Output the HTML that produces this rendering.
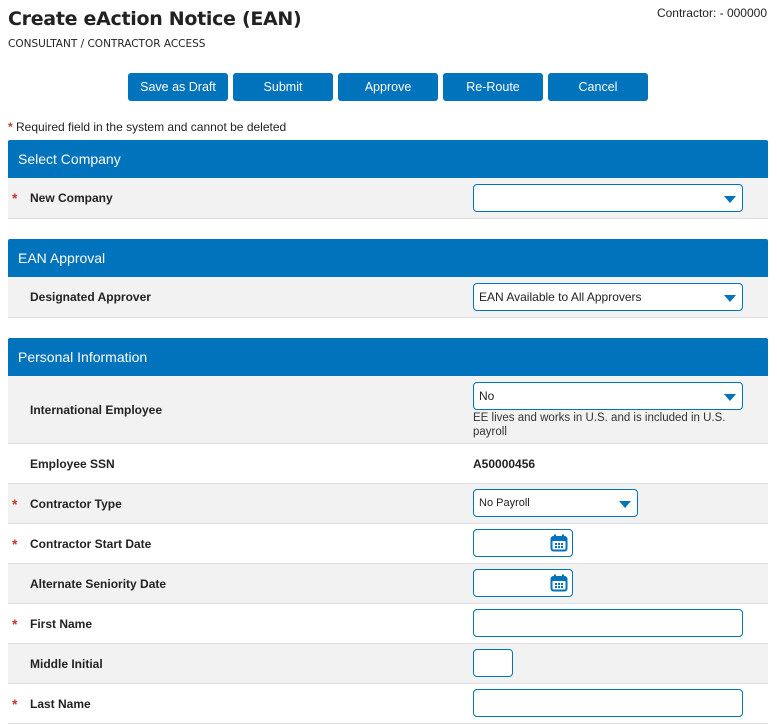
<!DOCTYPE html>
<html><head><style>
body{margin:0;width:777px;height:721px;overflow:hidden;background:#fff;font-family:"Liberation Sans",sans-serif;color:#222;position:relative}
.a{position:absolute}
h1{position:absolute;left:8px;top:8px;margin:0;font-size:19px;font-weight:bold;color:#222;font-family:"DejaVu Sans",sans-serif;letter-spacing:-0.3px}
.btn{position:absolute;top:73px;width:100px;height:28px;background:#0073bd;color:#fff;border-radius:3px;font-size:12.5px;text-align:center;line-height:28px}
.hd{position:absolute;left:8px;width:760px;height:38px;background:#0073bd;color:#fff;font-size:14px;line-height:38px;text-indent:10px;border-radius:2px 2px 0 0}
.row{position:absolute;left:8px;width:760px;border-bottom:1px solid #ddd;box-sizing:border-box}
.g{background:#f2f2f2}
.lb{position:absolute;left:22px;font-size:12px;font-weight:bold}
.st{position:absolute;left:4px;color:#c0392b;font-size:14px;font-weight:bold}
.in{position:absolute;left:465px;height:28px;border:1px solid #0073bd;border-radius:4px;background:#fff;box-sizing:border-box;font-size:12px;line-height:26px;padding-left:5px}
.tri{position:absolute;right:6px;top:11px;width:0;height:0;border-left:6px solid transparent;border-right:6px solid transparent;border-top:7px solid #0073bd}
.cal{position:absolute;right:4px;top:4px}
</style></head><body>
<h1>Create eAction Notice (EAN)</h1>
<div class="a" style="left:8px;top:38px;font-size:11.5px;font-family:'DejaVu Sans',sans-serif;font-size:10.5px">CONSULTANT / CONTRACTOR ACCESS</div>
<div class="a" style="right:10px;top:6px;font-size:12px">Contractor: - 000000</div>
<div class="btn" style="left:128px">Save as Draft</div>
<div class="btn" style="left:233px">Submit</div>
<div class="btn" style="left:338px">Approve</div>
<div class="btn" style="left:443px">Re-Route</div>
<div class="btn" style="left:548px">Cancel</div>
<div class="a" style="left:8px;top:120px;font-size:12px"><span style="color:#c0392b;font-weight:bold">*</span> Required field in the system and cannot be deleted</div>

<div class="hd" style="top:140px">Select Company</div>
<div class="row g" style="top:178px;height:41px"><span class="st" style="top:12px">*</span><span class="lb" style="top:13px">New Company</span><div class="in" style="top:6px;width:270px"><div class="tri"></div></div></div>

<div class="hd" style="top:239px">EAN Approval</div>
<div class="row g" style="top:277px;height:41px"><span class="lb" style="top:13px">Designated Approver</span><div class="in" style="top:6px;width:270px">EAN Available to All Approvers<div class="tri"></div></div></div>

<div class="hd" style="top:338px">Personal Information</div>
<div class="row g" style="top:376px;height:68px"><span class="lb" style="top:27px">International Employee</span><div class="in" style="top:6px;width:270px">No<div class="tri"></div></div><div class="a" style="left:465px;top:35px;font-size:11.5px;line-height:14px;color:#333">EE lives and works in U.S. and is included in U.S.<br>payroll</div></div>
<div class="row" style="top:444px;height:40px"><span class="lb" style="top:13px">Employee SSN</span><span class="a" style="left:465px;top:13px;font-size:12px;font-weight:bold">A50000456</span></div>
<div class="row g" style="top:484px;height:40px"><span class="st" style="top:12px">*</span><span class="lb" style="top:13px">Contractor Type</span><div class="in" style="top:5px;width:165px;font-size:11px">No Payroll<div class="tri"></div></div></div>
<div class="row" style="top:524px;height:40px"><span class="st" style="top:12px">*</span><span class="lb" style="top:13px">Contractor Start Date</span><div class="in" style="top:5px;width:100px"><svg class="cal" width="18" height="18" viewBox="0 0 18 18"><rect x="1.5" y="3" width="15" height="13.5" rx="2" fill="none" stroke="#0073bd" stroke-width="2"/><rect x="1.5" y="3" width="15" height="4" fill="#0073bd"/><rect x="4" y="0.5" width="2" height="4" fill="#0073bd"/><rect x="12" y="0.5" width="2" height="4" fill="#0073bd"/><g fill="#0073bd"><rect x="5" y="9" width="2" height="2"/><rect x="8" y="9" width="2" height="2"/><rect x="11" y="9" width="2" height="2"/><rect x="5" y="12" width="2" height="2"/><rect x="8" y="12" width="2" height="2"/><rect x="11" y="12" width="2" height="2"/></g></svg></div></div>
<div class="row g" style="top:564px;height:40px"><span class="lb" style="top:13px">Alternate Seniority Date</span><div class="in" style="top:5px;width:100px"><svg class="cal" width="18" height="18" viewBox="0 0 18 18"><rect x="1.5" y="3" width="15" height="13.5" rx="2" fill="none" stroke="#0073bd" stroke-width="2"/><rect x="1.5" y="3" width="15" height="4" fill="#0073bd"/><rect x="4" y="0.5" width="2" height="4" fill="#0073bd"/><rect x="12" y="0.5" width="2" height="4" fill="#0073bd"/><g fill="#0073bd"><rect x="5" y="9" width="2" height="2"/><rect x="8" y="9" width="2" height="2"/><rect x="11" y="9" width="2" height="2"/><rect x="5" y="12" width="2" height="2"/><rect x="8" y="12" width="2" height="2"/><rect x="11" y="12" width="2" height="2"/></g></svg></div></div>
<div class="row" style="top:604px;height:40px"><span class="st" style="top:12px">*</span><span class="lb" style="top:13px">First Name</span><div class="in" style="top:5px;width:270px"></div></div>
<div class="row g" style="top:644px;height:40px"><span class="lb" style="top:13px">Middle Initial</span><div class="in" style="top:5px;width:40px"></div></div>
<div class="row" style="top:684px;height:40px"><span class="st" style="top:12px">*</span><span class="lb" style="top:13px">Last Name</span><div class="in" style="top:5px;width:270px"></div></div>
</body></html>
